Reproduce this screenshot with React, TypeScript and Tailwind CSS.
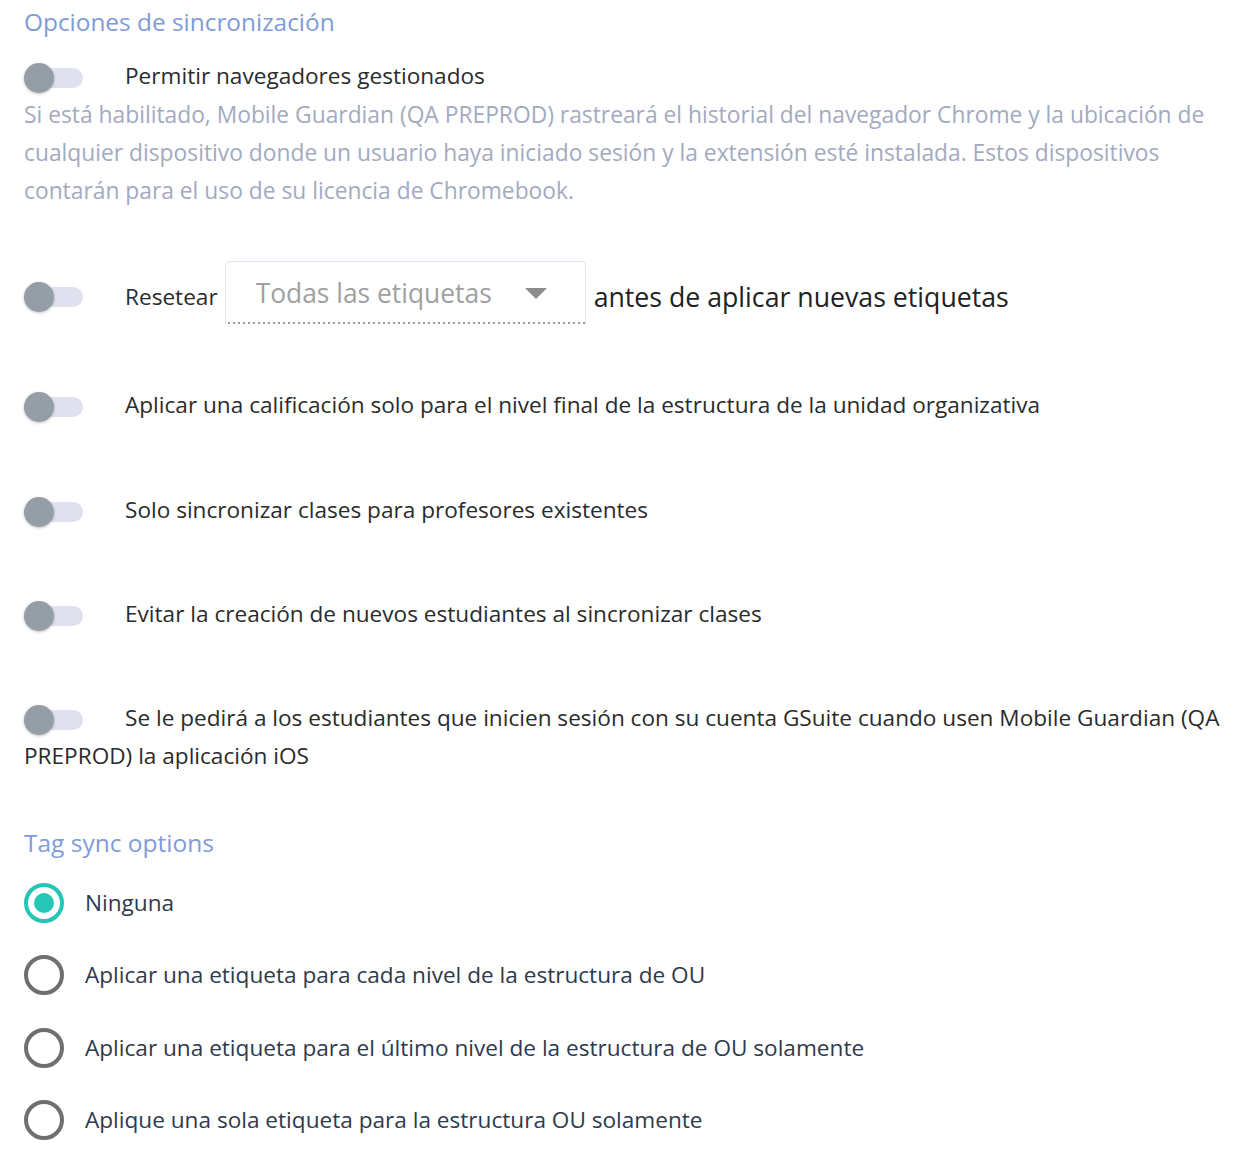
import React from 'react'

/**
 * Sync options panel: toggles for sync behaviour and tag sync radio group.
 */

const Toggle = ({ className = '' }: { className?: string }) => (
  <span className={`relative inline-flex h-[30px] w-[59px] shrink-0 items-center align-middle ${className}`}>
    <span className="absolute left-[6px] right-0 h-[20px] rounded-full bg-[#dfe2ee]" />
    <span className="absolute left-0 h-[30px] w-[30px] rounded-full bg-[#959ea7] shadow-[0_1px_3px_rgba(0,0,0,0.25)]" />
  </span>
)

const ToggleRow = ({ label, className = '' }: { label: string; className?: string }) => (
  <p className={`text-[22.6px] leading-[38.5px] text-[#2b2b2b] ${className}`}>
    <span className="mr-[42px] inline-flex align-middle">
      <Toggle />
    </span>
    {label}
  </p>
)

const Radio = ({ checked, label }: { checked?: boolean; label: string }) => (
  <div className="flex h-10 items-center">
    <span
      className={`flex h-10 w-10 shrink-0 items-center justify-center rounded-full border-4 ${
        checked ? 'border-[#26c6b6]' : 'border-[#6f6f6f]'
      }`}
    >
      {checked && <span className="h-5 w-5 rounded-full bg-[#26c6b6]" />}
    </span>
    <span className="ml-[21px] text-[22.6px] text-[#2e3a4d]">{label}</span>
  </div>
)

export default function App() {
  return (
    <div className="min-h-[1164px] w-[1256px] bg-white px-6 pt-[6px] font-['Open_Sans',sans-serif]">
      <h2 className="text-[24.4px] leading-[32px] text-[#7f9bd8]">Opciones de sincronización</h2>

      {/* Managed browsers */}
      <ToggleRow label="Permitir navegadores gestionados" className="mt-[19px]" />
      <p className="text-[22.8px] leading-[38.3px] text-[#a3aabf]">
        Si está habilitado, Mobile Guardian (QA PREPROD) rastreará el historial del navegador Chrome y la ubicación de
        cualquier dispositivo donde un usuario haya iniciado sesión y la extensión esté instalada. Estos dispositivos
        contarán para el uso de su licencia de Chromebook.
      </p>

      {/* Reset tags */}
      <div className="mt-[51px] flex h-[63px] items-center">
        <Toggle className="mt-2" />
        <span className="ml-[42px] mt-2 text-[22.6px] text-[#2b2b2b]">Resetear</span>
        <div className="ml-[7px] flex h-[63px] w-[361px] items-center justify-between rounded-t-[5px] border border-b-0 border-[#dde3f0] pl-[30px] pr-[38px] [background:linear-gradient(to_right,#9a9a9a_50%,transparent_0)_bottom/5px_2px_repeat-x]">
          <span className="text-[26.4px] text-[#a0a0a0]">Todas las etiquetas</span>
          <svg width="22" height="11" viewBox="0 0 22 11">
            <path d="M0 0h22L11 11z" fill="#8c8c8c" />
          </svg>
        </div>
        <span className="ml-[8px] mt-2 text-[26.7px] text-[#222]">antes de aplicar nuevas etiquetas</span>
      </div>

      <ToggleRow
        label="Aplicar una calificación solo para el nivel final de la estructura de la unidad organizativa"
        className="mt-[62px]"
      />
      <ToggleRow label="Solo sincronizar clases para profesores existentes" className="mt-[66px]" />
      <ToggleRow label="Evitar la creación de nuevos estudiantes al sincronizar clases" className="mt-[65.5px]" />
      <ToggleRow
        label="Se le pedirá a los estudiantes que inicien sesión con su cuenta GSuite cuando usen Mobile Guardian (QA PREPROD) la aplicación iOS"
        className="mt-[65.5px]"
      />

      {/* Tag sync */}
      <h2 className="mt-[51px] text-[24.5px] leading-[32px] text-[#7f9bd8]">Tag sync options</h2>
      <div className="mt-[24px] flex flex-col gap-[32.5px]">
        <Radio checked label="Ninguna" />
        <Radio label="Aplicar una etiqueta para cada nivel de la estructura de OU" />
        <Radio label="Aplicar una etiqueta para el último nivel de la estructura de OU solamente" />
        <Radio label="Aplique una sola etiqueta para la estructura OU solamente" />
      </div>
    </div>
  )
}
